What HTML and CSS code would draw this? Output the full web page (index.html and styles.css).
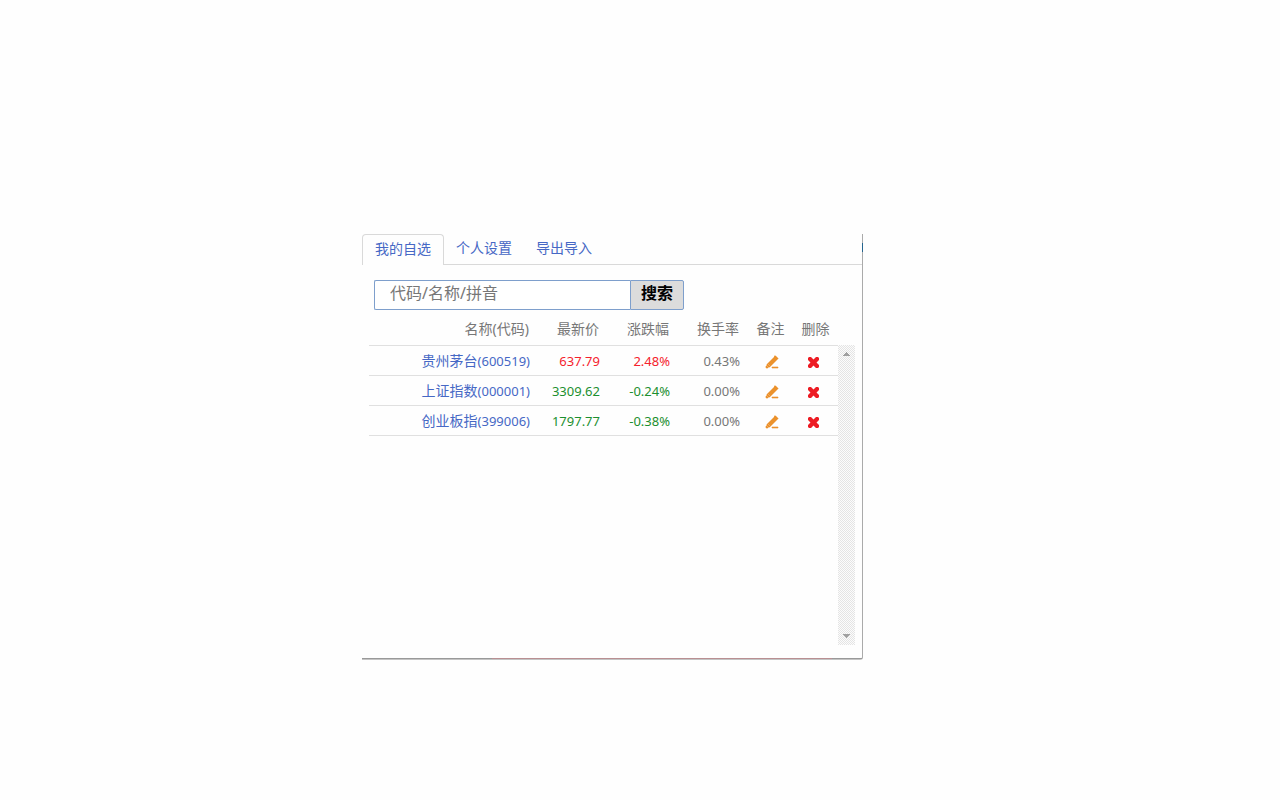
FILE: index.html
```html
<!DOCTYPE html>
<html lang="zh-CN">
<head>
<meta charset="utf-8">
<title>我的自选</title>
<link rel="stylesheet" href="styles.css">
</head>
<body>
<svg class="defs" aria-hidden="true">
  <symbol id="pencil" viewBox="0 0 14 14">
    <path d="M9 1h2v1h1v1h1v1h-1v1h-1v1h-1v1h-1v1h-1v1h-1v1h-1v1h-1v-1h-1v-1h-1v-1h1v-1h1v-1h1v-1h1v-1h1v-1h1v-1h1zM2 9h1v1h1v1h1v1h-2v-1h-1zM1 11h1v1h1v1h-2zM7 12h6v1h-6z" fill="#eb922b" stroke="#eb922b" stroke-width=".6"/>
  </symbol>
  <symbol id="cross" viewBox="0 0 13 13">
    <path d="M2 1h2l2.500 2.500L9 1h2l1 1v2L9.500 6.500 12 9v2l-1 1H9L6.500 9.500 4 12H2l-1-1V9l2.500-2.500L1 4V2z" fill="#ed1c24"/>
  </symbol>
</svg>
<main class="panel">
  <nav class="tabs">
    <a class="tab active" href="#mine">我的自选</a>
    <a class="tab" href="#settings">个人设置</a>
    <a class="tab" href="#export">导出导入</a>
    <span class="edge-mark"></span>
  </nav>
  <form class="search">
    <input class="search-input" type="text" placeholder="代码/名称/拼音" aria-label="代码/名称/拼音">
    <button class="search-button" type="button">搜索</button>
  </form>
  <div class="list">
    <table class="stocks">
      <colgroup>
        <col><col class="number"><col class="number"><col class="number"><col class="action"><col class="action">
      </colgroup>
      <thead>
        <tr><th>名称(代码)</th><th>最新价</th><th>涨跌幅</th><th>换手率</th><th class="icon">备注</th><th class="icon">删除</th></tr>
      </thead>
      <tbody>
        <tr>
          <td><a href="#600519"><span class="cjk">贵州茅台</span>(600519)</a></td>
          <td class="up">637.79</td><td class="up">2.48%</td><td>0.43%</td>
          <td class="icon note"><button type="button" aria-label="备注"><svg width="14" height="14"><use href="#pencil"/></svg></button></td>
          <td class="icon delete"><button type="button" aria-label="删除"><svg width="13" height="13"><use href="#cross"/></svg></button></td>
        </tr>
        <tr>
          <td><a href="#000001"><span class="cjk">上证指数</span>(000001)</a></td>
          <td class="down">3309.62</td><td class="down">-0.24%</td><td>0.00%</td>
          <td class="icon note"><button type="button" aria-label="备注"><svg width="14" height="14"><use href="#pencil"/></svg></button></td>
          <td class="icon delete"><button type="button" aria-label="删除"><svg width="13" height="13"><use href="#cross"/></svg></button></td>
        </tr>
        <tr>
          <td><a href="#399006"><span class="cjk">创业板指</span>(399006)</a></td>
          <td class="down">1797.77</td><td class="down">-0.38%</td><td>0.00%</td>
          <td class="icon note"><button type="button" aria-label="备注"><svg width="14" height="14"><use href="#pencil"/></svg></button></td>
          <td class="icon delete"><button type="button" aria-label="删除"><svg width="13" height="13"><use href="#cross"/></svg></button></td>
        </tr>
      </tbody>
    </table>
    <div class="scrollbar" aria-hidden="true">
      <svg width="7" height="4" viewBox="0 0 7 4"><path d="M0 4V3h1V2h1V1h1V0h1v1h1v1h1v1h1v1z" fill="#a0a0a0"/></svg>
      <svg width="7" height="4" viewBox="0 0 7 4"><path d="M0 0v1h1v1h1v1h1v1h1V3h1V2h1V1h1V0z" fill="#a0a0a0"/></svg>
    </div>
  </div>
  <div class="bottom-edge"></div>
</main>
</body>
</html>
```
FILE: styles.css
```css
* { box-sizing: border-box; }

body {
  margin: 0;
  padding: 234px 24px 24px 362px;
  background: #fefefe;
  color: #777;
  font: 14px/20px "Noto Sans", "Noto Sans CJK SC", sans-serif;
}

.defs { position: absolute; width: 0; height: 0; }

a { color: #4668c5; text-decoration: none; }

.panel {
  max-width: 501px;
  border-right: 1px solid #aaa;
  border-bottom: 1px solid #c4c4c4;
  border-bottom-right-radius: 3px;
}

.bottom-edge {
  height: 1px;
  margin-top: 13px;
  background: linear-gradient(90deg, #999 26%, #b98f92 26% 94%, #999 94%);
}

.tabs {
  position: relative;
  display: flex;
  height: 31px;
  border-bottom: 1px solid #d9d9d9;
}

.tab { padding: 4px 12px; }

.tab.active {
  height: 31px;
  background: #fefefe;
  border: 1px solid #d9d9d9;
  border-bottom: 0;
  border-radius: 4px 4px 0 0;
}

.edge-mark {
  position: absolute;
  top: 9px;
  right: -1px;
  width: 1px;
  height: 9px;
  background: #24648e;
}

.search { display: flex; padding: 15px 12px 5px; }

.search-input {
  width: 256px;
  height: 30px;
  padding: 0 15px 4px;
  border: 1px solid #7e9fcc;
  border-right: 0;
  border-radius: 2px 0 0 2px;
  background: #fff;
  color: #777;
  font: 16px/24px "Noto Sans", "Noto Sans CJK SC", sans-serif;
}

.search-input::placeholder { color: #777; opacity: 1; }

.search-button {
  width: 54px;
  height: 30px;
  padding: 0 0 4px;
  border: 1px solid #7e9fcc;
  border-radius: 0 2px 2px 0;
  background: #dcdcdc;
  color: #000;
  font: bold 16px/24px "Noto Sans", "Noto Sans CJK SC", sans-serif;
}

.list { display: flex; padding: 0 7px; }

.stocks {
  flex: 1;
  align-self: flex-start;
  table-layout: fixed;
  border-collapse: separate;
  border-spacing: 0;
}

.number { width: 70px; }
.action { width: 45px; }

.stocks th,
.stocks td {
  height: 30px;
  padding: 0 8px 0 0;
  border-bottom: 1px solid #e0e0e0;
  text-align: right;
  font-weight: normal;
  white-space: nowrap;
}

.stocks th { height: 31px; padding: 0 9px 2px 0; }
.stocks td { font-size: 13px; }
.stocks td.icon { padding: 0; text-align: center; }
.stocks th.icon { padding: 0 0 2px; text-align: center; }
.stocks td.note { padding-left: 2px; }
.stocks td.delete { padding-right: 4px; }
.cjk { font-size: 14px; }

.stocks .up { color: #f5222d; }
.stocks .down { color: #1c8f2f; }

.icon button {
  display: inline-block;
  padding: 0;
  border: 0;
  background: none;
  vertical-align: middle;
}

.icon svg { display: block; }

.scrollbar {
  display: flex;
  flex-direction: column;
  align-items: center;
  justify-content: space-between;
  width: 17px;
  height: 300px;
  margin-top: 30px;
  padding: 7px 0;
  background: repeating-conic-gradient(#e4e4e4 0 25%, #fcfcfc 0 50%) 0 0 / 2px 2px;
}
```
